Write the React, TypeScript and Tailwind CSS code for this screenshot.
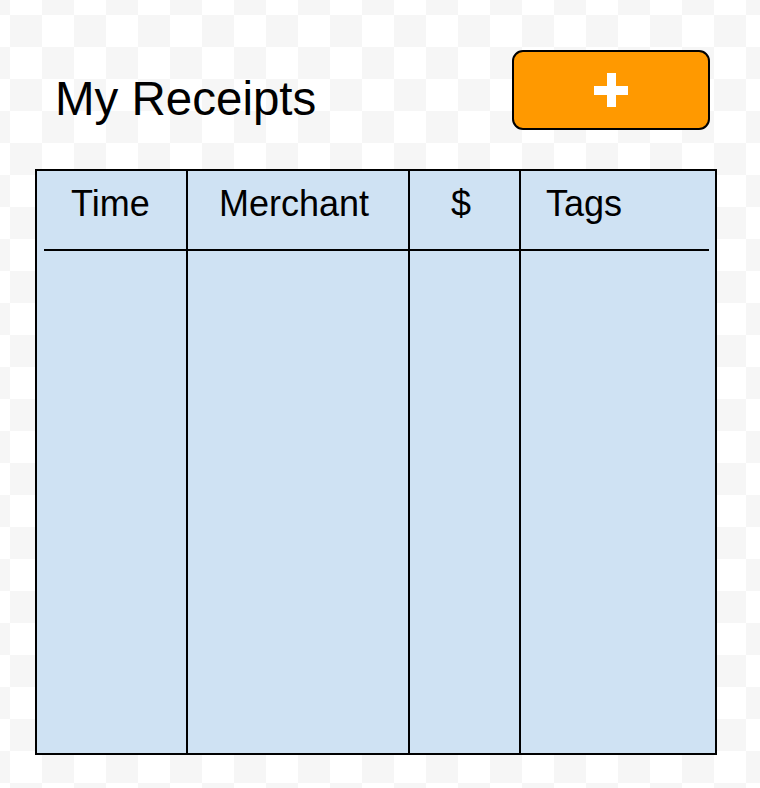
const columns = [
  { label: "Time", width: "w-[151px]", pad: "pl-[34px]" },
  { label: "Merchant", width: "w-[222px]", pad: "pl-[31px]" },
  { label: "$", width: "w-[111px]", pad: "pl-[41px]" },
  { label: "Tags", width: "flex-1", pad: "pl-[25px]" },
];

function PlusIcon() {
  return (
    <svg width="34" height="34" viewBox="0 0 34 34" aria-hidden="true">
      <rect x="13" y="0" width="9" height="34" fill="#ffffff" />
      <rect x="0" y="13" width="34" height="9" fill="#ffffff" />
    </svg>
  );
}

export default function App() {
  return (
    <div className="relative h-[788px] w-[760px] overflow-hidden bg-white bg-[repeating-conic-gradient(#f6f6f6_0%_25%,#ffffff_0%_50%)] bg-[length:64px_64px] bg-[position:-22px_15px] font-['Liberation_Sans',Arial,sans-serif] text-black">
      <header className="flex items-start">
        <h1 className="ml-[55px] mt-[75px] text-[47.5px] font-normal leading-none">
          My Receipts
        </h1>
        <button
          type="button"
          aria-label="Add receipt"
          className="ml-auto mr-[50px] mt-[50px] flex h-[80px] w-[198px] items-center justify-center rounded-[11px] border-2 border-black bg-[#ff9900]"
        >
          <PlusIcon />
        </button>
      </header>

      <div className="ml-[35px] mt-[39px] flex h-[586px] w-[682px] flex-col border-2 border-black bg-[#cfe2f3]">
        <div className="flex h-[78px]">
          {columns.map((c, i) => (
            <div
              key={c.label}
              className={`${c.width} ${c.pad} ${i < columns.length - 1 ? "border-r-2 border-black" : ""} pt-[15px] text-[36px] leading-none`}
            >
              {c.label}
            </div>
          ))}
        </div>
        <div className="ml-[7px] mr-[6px] h-[2px] bg-black" />
        <div className="flex flex-1">
          {columns.map((c, i) => (
            <div
              key={c.label}
              className={`${c.width} ${i < columns.length - 1 ? "border-r-2 border-black" : ""}`}
            />
          ))}
        </div>
      </div>
    </div>
  );
}
